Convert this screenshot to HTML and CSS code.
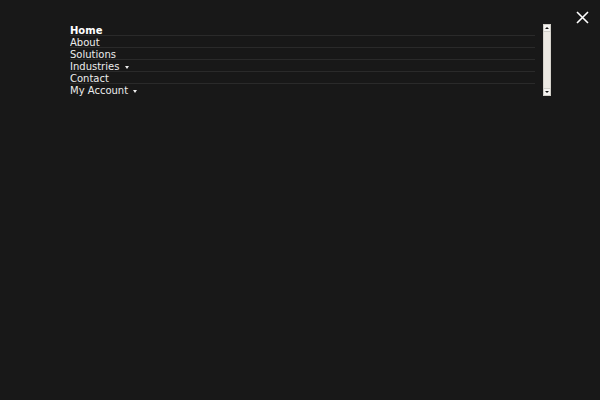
FILE: index.html
```html
<!DOCTYPE html>
<html>
<head>
<meta charset="utf-8">
<link rel="stylesheet" href="styles.css">
</head>
<body>
<div class="overlay">
  <div class="menu-wrap">
    <ul class="menu">
      <li class="item active">Home</li>
      <li class="item">About</li>
      <li class="item">Solutions</li>
      <li class="item">Industries <span class="caret"></span></li>
      <li class="item">Contact</li>
      <li class="item">My Account <span class="caret"></span></li>
    </ul>
    <div class="scrollbar">
      <div class="sb-btn"><span class="sb-up"></span></div>
      <div class="sb-thumb"></div>
      <div class="sb-btn"><span class="sb-down"></span></div>
    </div>
  </div>
  <button class="close" aria-label="Close">
    <svg width="13" height="13" viewBox="0 0 13 13"><path d="M1 1L12 12M12 1L1 12" stroke="#fff" stroke-width="1.6" fill="none"/></svg>
  </button>
</div>
</body>
</html>
```
FILE: styles.css
```css
html, body {
  margin: 0;
  padding: 0;
  background: #181818;
  width: 600px;
  height: 400px;
  overflow: hidden;
}
.overlay {
  position: relative;
  width: 600px;
  height: 400px;
  font-family: "DejaVu Sans", sans-serif;
  font-size: 10px;
  color: #ececec;
}
.menu-wrap {
  display: flex;
  gap: 8px;
  padding: 24px 0 0 70px;
}
.menu {
  list-style: none;
  margin: 0;
  padding: 0;
  width: 465px;
  height: 72px;
  overflow: hidden;
}
.item {
  height: 11px;
  line-height: 13px;
  border-bottom: 1px solid #2a2a2a;
  white-space: nowrap;
}
.item:last-child {
  border-bottom-color: transparent;
}
.item.active {
  font-weight: bold;
  color: #ffffff;
}
.caret {
  display: inline-block;
  width: 0;
  height: 0;
  border-left: 2.5px solid transparent;
  border-right: 2.5px solid transparent;
  border-top: 3px solid #eeeeee;
  vertical-align: 1px;
  margin-left: 2px;
}
.scrollbar {
  width: 8px;
  height: 72px;
  display: flex;
  flex-direction: column;
  background: #f0eee9;
}
.sb-btn {
  height: 8px;
  background: #f4f3f0;
  display: flex;
  align-items: center;
  justify-content: center;
  border: 1px solid #d0cec8;
  box-sizing: border-box;
}
.sb-up {
  width: 0; height: 0;
  border-left: 2px solid transparent;
  border-right: 2px solid transparent;
  border-bottom: 2px solid #111;
}
.sb-down {
  width: 0; height: 0;
  border-left: 2px solid transparent;
  border-right: 2px solid transparent;
  border-top: 2px solid #111;
}
.sb-thumb {
  flex: 1;
  background: #ece9e3;
  border-left: 1px solid #d6d3cc;
  border-right: 1px solid #d6d3cc;
}
.close {
  position: absolute;
  top: 10px;
  left: 575px;
  width: 15px;
  height: 15px;
  padding: 1px;
  margin: 0;
  border: 0;
  background: transparent;
  display: flex;
  align-items: center;
  justify-content: center;
}
```
